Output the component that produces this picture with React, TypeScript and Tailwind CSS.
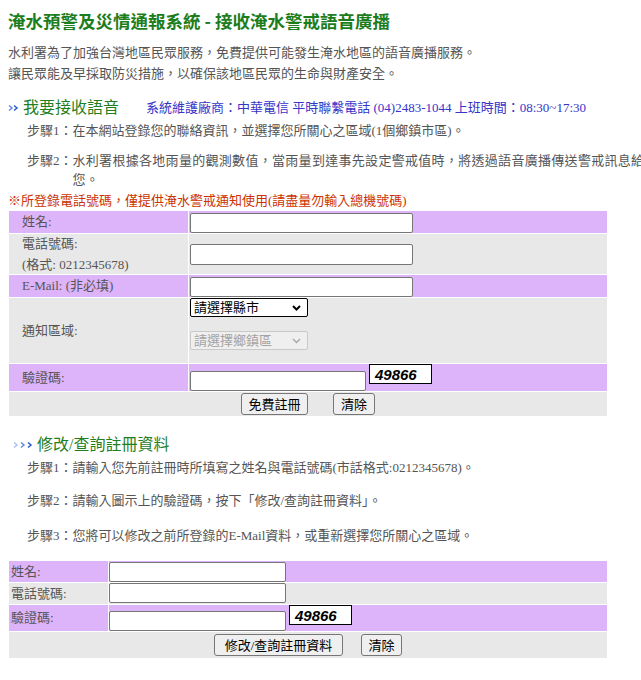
import React from "react";

const FONT = "font-['Liberation_Serif','Noto_Sans_CJK_TC',serif]";

function Chevrons({ count, step }: { count: number; step: number }) {
  const colors = ["#a9c2f2", "#5f8ae0", "#2a58c8"];
  const w = (count - 1) * step + 6;
  return (
    <svg width={w} height="8" viewBox={`0 0 ${w} 8`} className="shrink-0">
      {Array.from({ length: count }).map((_, i) => (
        <path
          key={i}
          d={`M${1 + i * step} 1.5 L${4 + i * step} 4 L${1 + i * step} 6.5`}
          stroke={colors[colors.length - count + i]}
          strokeWidth="1.5"
          fill="none"
        />
      ))}
    </svg>
  );
}

function TextBox({ className }: { className: string }) {
  return (
    <input
      type="text"
      className={`block h-[20px] rounded-[2px] border border-[#767676] bg-white px-1 text-[13px] ${className}`}
    />
  );
}

function Captcha() {
  return (
    <div className="flex h-[20px] w-[63px] items-center border border-black bg-white pl-[5px] font-['Liberation_Sans',Arial,sans-serif] text-[15px] font-bold italic leading-none text-black">
      49866
    </div>
  );
}

function Btn({ children, className }: { children: React.ReactNode; className: string }) {
  return (
    <button
      type="button"
      className={`h-[22px] rounded-[3px] border border-[#767676] bg-[#efefef] text-[13px] leading-none text-black ${className}`}
    >
      {children}
    </button>
  );
}

function Dropdown({ label, disabled }: { label: string; disabled?: boolean }) {
  return (
    <div className="relative h-[19px] w-[118px]">
      <select
        disabled={disabled}
        className={
          disabled
            ? "block h-full w-full appearance-none rounded-[2px] border border-[#c9c9c9] bg-[#efefef] pl-[3px] text-[13px] leading-none text-[#a3a3a3]"
            : "block h-full w-full appearance-none rounded-[2px] border border-black bg-white pl-[3px] text-[13px] leading-none text-black"
        }
      >
        <option>{label}</option>
      </select>
      <svg
        className="pointer-events-none absolute right-[7px] top-[7px]"
        width="9"
        height="6"
        viewBox="0 0 9 6"
      >
        <path
          d="M1 1 L4.5 4.5 L8 1"
          stroke={disabled ? "#a8a8a8" : "#000"}
          strokeWidth={disabled ? 1.4 : 2}
          fill="none"
        />
      </svg>
    </div>
  );
}

export default function App() {
  return (
    <div className={`w-full overflow-hidden bg-white ${FONT} text-[13px] text-[#555]`}>
      <div className="w-[700px] px-2 pb-6">
        {/* page title */}
        <h1 className="pt-[8px] font-['Noto_Sans_CJK_TC',sans-serif] text-[17.5px] font-bold leading-[25px] text-[#1c7d1c]">
          淹水預警及災情通報系統 - 接收淹水警戒語音廣播
        </h1>

        <p className="mt-[9px] leading-[21px]">
          水利署為了加強台灣地區民眾服務，免費提供可能發生淹水地區的語音廣播服務。
          <br />
          讓民眾能及早採取防災措施，以確保該地區民眾的生命與財產安全。
        </p>

        {/* section: register */}
        <div className="mt-[12px] flex items-center leading-[24px]">
          <Chevrons count={2} step={5} />
          <span className="ml-[4px] text-[16px] text-[#1f801f]">我要接收語音</span>
          <span className="ml-[27px] text-[13px] text-[#3535c8]">
            系統維護廠商：中華電信 平時聯繫電話 (04)2483-1044 上班時間：08:30~17:30
          </span>
        </div>

        <div className="mt-px flex pl-[19px] leading-[20px]">
          <span className="shrink-0">步驟1：</span>
          <span>在本網站登錄您的聯絡資訊，並選擇您所關心之區域(1個鄉鎮市區)。</span>
        </div>
        <div className="mt-[10px] flex pl-[19px] leading-[19px]">
          <span className="shrink-0">步驟2：</span>
          <span className="whitespace-nowrap tracking-[0.3px]">
            水利署根據各地雨量的觀測數值，當雨量到達事先設定警戒值時，將透過語音廣播傳送警戒訊息給
            <br />
            您。
          </span>
        </div>

        <div className="mt-[2px] leading-[20px] text-[#cc3300]">
          ※所登錄電話號碼，僅提供淹水警戒通知使用(請盡量勿輸入總機號碼)
        </div>

        {/* register form */}
        <div className="ml-px grid w-[598px] grid-cols-[179px_418px] gap-px bg-white">
          <div className="flex h-[22px] items-center bg-[#ddb3f9] pl-[13px]">姓名:</div>
          <div className="flex h-[22px] items-end bg-[#ddb3f9] pl-px">
            <TextBox className="w-[223px]" />
          </div>

          <div className="flex h-[40px] flex-col justify-center bg-[#e8e8e8] pl-[13px] leading-[21px]">
            <span>電話號碼:</span>
            <span>(格式: 0212345678)</span>
          </div>
          <div className="flex h-[40px] items-center bg-[#e8e8e8] pl-px">
            <TextBox className="h-[21px] w-[223px]" />
          </div>

          <div className="flex h-[22px] items-center bg-[#ddb3f9] pl-[13px]">E-Mail: (非必填)</div>
          <div className="flex h-[22px] items-end bg-[#ddb3f9] pl-px">
            <TextBox className="w-[223px]" />
          </div>

          <div className="flex h-[65px] items-center bg-[#e8e8e8] pl-[13px]">通知區域:</div>
          <div className="flex h-[65px] flex-col gap-[14px] bg-[#e8e8e8] pl-px">
            <Dropdown label="請選擇縣市" />
            <Dropdown label="請選擇鄉鎮區" disabled />
          </div>

          <div className="flex h-[27px] items-center bg-[#ddb3f9] pl-[13px]">驗證碼:</div>
          <div className="flex h-[27px] items-start gap-[3px] bg-[#ddb3f9] pl-px">
            <TextBox className="mt-[7px] w-[176px]" />
            <Captcha />
          </div>

          <div className="col-span-2 flex h-[24px] items-center justify-center gap-[25px] bg-[#e8e8e8]">
            <Btn className="w-[67px]">免費註冊</Btn>
            <Btn className="w-[42px]">清除</Btn>
          </div>
        </div>

        {/* section: modify / query */}
        <div className="mt-[17px] flex items-center pl-[5px] leading-[24px]">
          <Chevrons count={3} step={7} />
          <span className="ml-[4px] text-[16px] text-[#1f801f]">修改/查詢註冊資料</span>
        </div>

        <div className="mt-px pl-[19px] leading-[20px]">
          步驟1：請輸入您先前註冊時所填寫之姓名與電話號碼(市話格式:0212345678)。
        </div>
        <div className="mt-[13px] pl-[19px] leading-[20px]">
          步驟2：請輸入圖示上的驗證碼，按下「修改/查詢註冊資料」。
        </div>
        <div className="mt-[15px] pl-[19px] leading-[20px]">
          步驟3：您將可以修改之前所登錄的E-Mail資料，或重新選擇您所關心之區域。
        </div>

        {/* modify form */}
        <div className="ml-px mt-[15px] grid w-[598px] grid-cols-[99px_498px] gap-px bg-white">
          <div className="flex h-[21px] items-center bg-[#ddb3f9] pl-[2px]">姓名:</div>
          <div className="flex h-[21px] items-end bg-[#ddb3f9]">
            <TextBox className="w-[177px]" />
          </div>

          <div className="flex h-[21px] items-center bg-[#e8e8e8] pl-[2px]">電話號碼:</div>
          <div className="flex h-[21px] items-start bg-[#e8e8e8]">
            <TextBox className="w-[177px]" />
          </div>

          <div className="flex h-[26px] items-center bg-[#ddb3f9] pl-[2px]">驗證碼:</div>
          <div className="flex h-[26px] items-start gap-[3px] bg-[#ddb3f9]">
            <TextBox className="mt-[6px] w-[177px]" />
            <Captcha />
          </div>

          <div className="col-span-2 flex h-[26px] items-center justify-center gap-[18px] bg-[#e8e8e8]">
            <Btn className="w-[129px]">修改/查詢註冊資料</Btn>
            <Btn className="w-[41px]">清除</Btn>
          </div>
        </div>
      </div>
    </div>
  );
}
